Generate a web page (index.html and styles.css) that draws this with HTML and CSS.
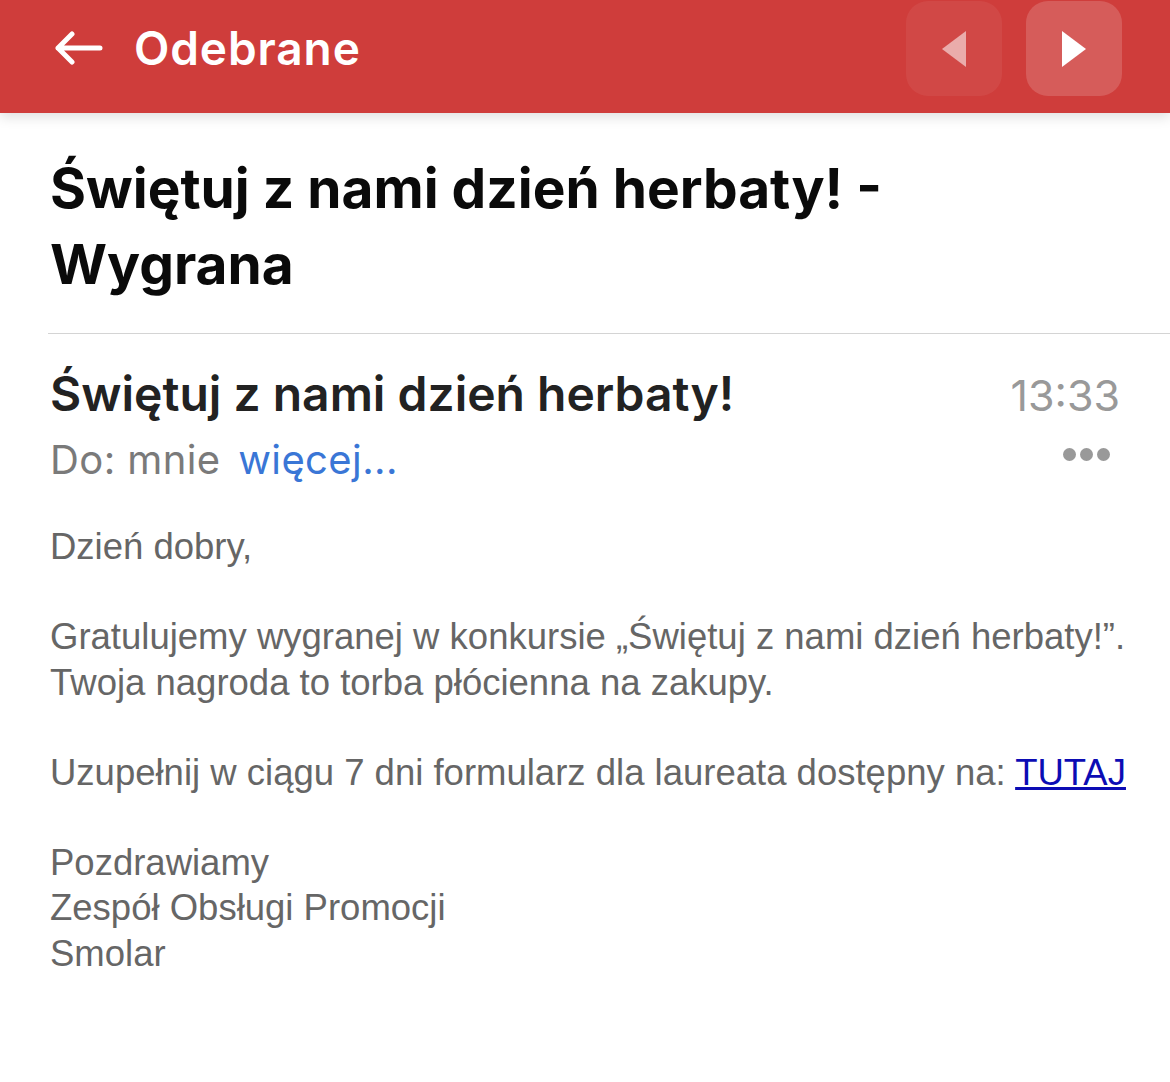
FILE: index.html
```html
<!DOCTYPE html>
<html lang="pl">
<head>
    <meta charset="UTF-8">
    <meta name="viewport" content="width=device-width, initial-scale=1.0">
    <title>Odebrane</title>
    <link rel="stylesheet" href="styles.css">
</head>
<body>
    <div class="topbar">
        <a class="back" href="#">
            <svg class="back-icon" width="50" height="34" viewBox="0 0 50 34"><path d="M47 17H5M19 3L5 17l14 14" fill="none" stroke="#fff" stroke-width="5" stroke-linecap="round" stroke-linejoin="round"/></svg>
            <span>Odebrane</span>
        </a>
        <div class="nav">
            <button class="nav-btn prev"><svg width="26" height="38" viewBox="0 0 26 38"><path d="M25 1V37L1 19Z" fill="#fff" fill-opacity="0.55"/></svg></button>
            <button class="nav-btn next"><svg width="26" height="38" viewBox="0 0 26 38"><path d="M1 1V37L25 19Z" fill="#fff"/></svg></button>
        </div>
    </div>

    <div class="content">
        <h1 class="title">Świętuj z nami dzień herbaty! - Wygrana</h1>
        <div class="message">
            <div class="msg-head">
                <div class="subject">Świętuj z nami dzień herbaty!</div>
                <div class="time">13:33</div>
            </div>
            <div class="msg-to">
                <div>Do: mnie <a href="#" class="more">więcej...</a></div>
                <div class="dots"><i></i><i></i><i></i></div>
            </div>
            <div class="body">
                <p>Dzień dobry,</p>
                <p>Gratulujemy wygranej w konkursie „Świętuj z nami dzień herbaty!”.<br>Twoja nagroda to torba płócienna na zakupy.</p>
                <p>Uzupełnij w ciągu 7 dni formularz dla laureata dostępny na: <a href="#" class="link">TUTAJ</a></p>
                <p>Pozdrawiamy<br>Zespół Obsługi Promocji<br>Smolar</p>
            </div>
        </div>
    </div>
</body>
</html>
```

FILE: styles.css
```css
body { margin: 0; background: #fff; font-family: Inter, "Noto Sans", sans-serif; color: #111; }
.topbar { height: 113px; background: #cf3d3b; display: flex; justify-content: space-between; align-items: flex-start; padding: 0 48px 0 53px; box-shadow: 0 4px 12px rgba(0, 0, 0, 0.13); position: relative; }
.back { display: flex; align-items: center; gap: 31px; height: 96px; color: #fff; text-decoration: none; font-size: 46px; font-weight: 600; letter-spacing: 0.9px; }
.nav { display: flex; gap: 24px; padding-top: 1px; }
.nav-btn { width: 96px; height: 95px; border: none; border-radius: 22px; display: flex; align-items: center; justify-content: center; padding: 0; }
.nav-btn.prev { background: rgba(255, 255, 255, 0.06); }
.nav-btn.next { background: rgba(255, 255, 255, 0.16); }
.content { padding-left: 48px; }
.title { margin: 0; padding: 37px 220px 31px 2px; font-size: 55px; font-weight: 700; line-height: 76px; color: #0a0a0a; border-bottom: 1px solid #d4d4d4; }
.message { padding: 30px 43px 0 2px; }
.msg-head { display: flex; justify-content: space-between; align-items: baseline; line-height: 60px; padding-right: 7px; }
.subject { font-size: 48px; font-weight: 600; color: #222; }
.time { font-size: 43px; color: #999; }
.msg-to { display: flex; justify-content: space-between; align-items: center; margin-top: 10px; font-size: 40px; letter-spacing: 0.4px; line-height: 50px; color: #7a7a7a; padding-right: 7px; }
.more { color: #3a76d6; text-decoration: none; margin-left: 6px; }
.dots { display: flex; gap: 4px; margin-right: 10px; margin-top: -12px; }
.dots i { width: 13px; height: 13px; border-radius: 50%; background: #999; }
.body { font-family: "Liberation Sans", Arial, sans-serif; font-size: 36.5px; line-height: 45.5px; color: #666; margin-top: 39px; }
.body p { margin: 0 0 44.5px; }
.link { color: #0c0cb4; }
```
